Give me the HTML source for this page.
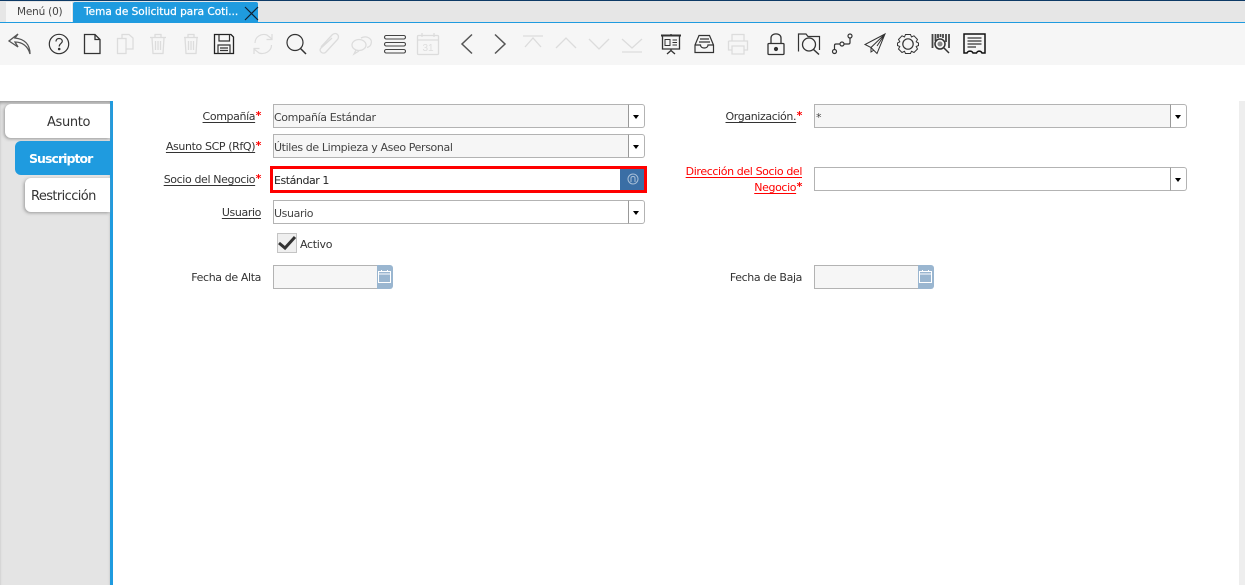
<!DOCTYPE html>
<html lang="es"><head><meta charset="utf-8"><title>Tema de Solicitud</title>
<style>
html,body{margin:0;padding:0;width:1245px;height:585px;overflow:hidden;background:#fff;font-family:"DejaVu Sans","Liberation Sans",sans-serif;color:#333}
div,span,svg{position:absolute;box-sizing:border-box}
.t{white-space:nowrap;font-size:11px;line-height:14px}
.l{white-space:nowrap;font-size:11px;line-height:14px;text-align:right;color:#333;letter-spacing:-.38px}
.l u{text-underline-offset:2px}
.l b{color:#f00;font-weight:bold;font-size:11px;position:relative;top:-1px;margin-left:.5px}
.f{border:1px solid #b3b3b3;background:#f6f6f6;height:24px;font-size:11px;line-height:25px;padding-left:0;white-space:nowrap;letter-spacing:-.38px;color:#444}
.b{border:1px solid #b3b3b3;border-left:1px solid #999;border-radius:0 3px 3px 0;background:#fff;width:17px;height:24px}
.b:after{content:"";position:absolute;left:4px;top:10px;border:3px solid transparent;border-top:4px solid #000;border-bottom:0;border-left-width:3.5px;border-right-width:3.5px}
.tab{left:0;height:34px;border-radius:6px 0 0 6px;background:#fff;box-shadow:-1px 1px 3px #999;font-size:13px;line-height:37px;color:#333;white-space:nowrap}
.cal{background:#9ab6d0;width:16px;height:24px;border-radius:0 3px 3px 0}
</style></head><body>
<div style="left:0;top:0;width:1245px;height:1px;background:#0d3a66"></div>
<div style="left:0;top:1px;width:1245px;height:21px;background:#e6e6e6"></div>
<div style="left:0;top:22px;width:1245px;height:1px;background:#1f9bdf"></div>
<div style="left:0;top:23px;width:1245px;height:42px;background:#f6f6f6"></div>
<div style="left:6px;top:2px;width:66px;height:20px;background:#f6f6f6;border-right:1px solid #fff"></div>
<div class="t" style="left:17px;top:5px;font-size:10.5px;letter-spacing:-.2px;color:#444">Menú (0)</div>
<div style="left:73px;top:2px;width:185px;height:20px;background:#1f9bdf;border-radius:2px 2px 0 0"></div>
<div class="t" style="left:84px;top:5px;color:#fff;font-size:10.5px;letter-spacing:.01px;font-weight:normal;-webkit-text-stroke:.25px #fff">Tema de Solicitud para Coti...</div>

<svg style="left:0;top:0" width="1245" height="65" viewBox="0 0 1245 65" fill="none" stroke="#333" stroke-width="1.2">
<path d="M245 7L258 20M258 7L245 20" stroke="#123"/>
<!-- back -->
<path d="M30 54C30 44 24 39 15 38L18 34L9 41L18 47L15 42C22 42 28 46 30 54Z" stroke="#555" stroke-width="1.3"/>
<!-- help -->
<circle cx="59" cy="44" r="9.7"/><path d="M56 41.500C56 39.500 57.500 38.500 59 38.500C61 38.500 62.300 39.800 62.300 41.300C62.300 43.500 59.200 43.500 59.200 46.500" /><circle cx="59.200" cy="49" r=".7" fill="#333"/>
<!-- new -->
<path d="M84.500 34.500H95L100 39.500V53.500H84.500Z M95 34.500V39.500H100" stroke-width="1.3"/>
<!-- disabled -->
<g stroke="#dcdcdc" stroke-width="1.3">
<path d="M117.500 38.500H126V53.500H117.500ZM122 38V34.500H129L133 38V49H126"/>
<path d="M150 37.500H166M155 37V34.500H161V37M152 38L153 53.500H163L164 38M155.500 41V50M158 41V50M160.500 41V50"/>
<path d="M184 37.500H198M188 37V34.500H194V37M185 38L186 53.500H196L197 38M188.500 41V50M191 41V50M193.500 41V50"/>
<path d="M255 43C255 37 261 33 267 35L272 39M272 34V39.500H266.500M271.500 45C271.500 51 265 55 259 53L254 49M254 54V48.500H259.500" stroke-width="1.2"/>
<path d="M321 47L332 35C336 31 341 36 337 40L326 52C323 55 318 51 321 48L332 38" fill="none"/>
<ellipse cx="359" cy="45" rx="7" ry="5.500"/><path d="M356 50L354 54L359 51"/><path d="M361 38C367 35 373 39 371 44C370.500 46 369 47 367 47.500"/>
<rect x="417.500" y="35.500" width="21" height="19" rx="1"/><path d="M417.500 40H438.500M422 33V37M434 33V37"/>
<path d="M523 36H543M525 47L533 38L541 47" />
<path d="M556 48L566 38L576 48M589 39L599 49L609 39M622 39L632 48L642 39M622 52H642" />
<path d="M732 41V34.500H744V41M728.500 41H747.500V50H744M732 50H728.500V41M732 46H744V54H732Z"/>
</g>
<text x="428" y="51" fill="#ddd" stroke="none" font-family="Liberation Sans" font-size="10" text-anchor="middle">31</text>
<!-- search -->
<circle cx="295" cy="42.500" r="8"/><path d="M300.500 48.500L306 54" stroke-width="1.5"/>
<!-- grid -->
<g stroke-width="1.100" stroke="#444"><rect x="384.500" y="35.500" width="21" height="3.500" rx="1.700"/><rect x="384.500" y="42.500" width="21" height="3.500" rx="1.700"/><rect x="384.500" y="49.500" width="21" height="3.500" rx="1.700"/></g>
<!-- save -->
<path d="M214.500 34.500H231L233.500 37V53.500H214.500Z" stroke-width="1.300" stroke="#222"/><path d="M219 34.500V41H229.500V34.500M218 53.500V45H230V53.500M220 48H228M220 50.500H228" stroke-width="1.200"/>
<!-- arrows -->
<path d="M472 34.500L462 44L472 53.500M495 34.500L505 44L495 53.500" stroke="#555" stroke-width="1.500"/>
<!-- report -->
<path d="M661 35.500H681" stroke-width="2"/><path d="M662.500 36V49H679.500V36M671 34V36M671 49V51M667 54L671 50.500L675 54" stroke-width="1.300"/><path d="M665 39.500H670V45.500H665ZM672.500 40H677M672.500 42.500H677M672.500 45H677" stroke-width="1"/>
<!-- archive -->
<path d="M695 45L699 35.500H709.500L713.500 45V52.500H695ZM695 45H700.500C700.500 49 708 49 708 45H713.500M699 42H710M700 39H709" stroke-width="1.200"/>
<!-- lock -->
<rect x="768" y="43.500" width="16" height="11" rx="1" stroke-width="1.300"/><path d="M771 43.500V38C771 32.500 781 32.500 781 38V43.500" stroke-width="1.300"/><circle cx="776" cy="49" r="1.500" fill="#333"/>
<!-- folder search -->
<path d="M798.500 51.500V34H806L808 36.500H819.500V50" stroke-width="1.200"/><circle cx="809" cy="44.500" r="6.500" stroke-width="1.300"/><path d="M813.500 49.500L819 54.500" stroke-width="1.500"/>
<!-- workflow -->
<circle cx="834.500" cy="51.500" r="2"/><circle cx="842" cy="44" r="2"/><circle cx="850" cy="36" r="2"/><path d="M834.500 49.500V45.500Q834.500 44 836 44H840M844 44H848.500Q850 44 850 42.500V38"/>
<!-- send -->
<path d="M885 34L865 44.500L871 47.500L877 53.500ZM885 34L871 47.500V52L874 50M885 34L877 46" stroke-width="1"/>
<!-- gear -->
<circle cx="908" cy="44" r="5.200" stroke-width="1.200"/><path d="M905.500 34.500H910.500L911.500 37L914 35.800L917.500 39.500L916.200 41.800L918.500 43V45.500L916.200 46.500L917.500 49L914 52.500L911.500 51.300L910.500 53.500H905.500L904.500 51.300L902 52.500L898.500 49L899.800 46.500L897.500 45.500V43L899.800 41.800L898.500 39.500L902 35.800L904.500 37Z" stroke-width="1"/>
<!-- barcode -->
<path d="M932.500 34V48M935.500 34V41M938 34V38M940.500 34V37M943 34V38M946 34V42M949 34V48" stroke-width="1.800" stroke="#444"/><circle cx="940" cy="44" r="5" stroke-width="1.500" fill="#f6f6f6"/><circle cx="940" cy="44" r="2.500" fill="#888" stroke="none"/><path d="M944 48L949 53" stroke-width="1.500"/>
<!-- receipt -->
<path d="M964 34H985V53H982C981 50.500 977.500 50.500 976.500 53H973C972 50.500 968 50.500 967 53H964Z" stroke-width="1.500" stroke="#111"/><path d="M967.500 38H981.500M967.500 41H981.500M967.500 44H981.500M967.500 47H976" stroke-width="1.500" stroke="#555"/>
</svg>

<!-- side panel -->
<div style="left:0;top:101px;width:110px;height:484px;background:#e4e4e4;box-shadow:inset 0 3px 3px -1px #999"></div>
<div style="left:110px;top:101px;width:3px;height:484px;background:#1f9bdf"></div>
<div style="left:1239px;top:101px;width:6px;height:484px;background:#eee"></div>
<div class="tab" style="left:5px;top:104px;width:105px;padding-left:42px;letter-spacing:-.35px">Asunto</div>
<div class="tab" style="left:15px;top:141px;width:95px;padding-left:14px;background:#1f9bdf;color:#fff;font-weight:bold;font-size:12.5px;letter-spacing:-.95px;box-shadow:none;line-height:35px">Suscriptor</div>
<div class="tab" style="left:25px;top:178px;width:85px;padding-left:6px;letter-spacing:-.6px">Restricción</div>

<!-- labels -->
<div class="l" style="right:984px;top:110px"><u>Compañía</u><b>*</b></div>
<div class="l" style="right:984px;top:140px"><u>Asunto SCP (RfQ)</u><b>*</b></div>
<div class="l" style="right:984px;top:173px"><u>Socio del Negocio</u><b>*</b></div>
<div class="l" style="right:984px;top:206px"><u>Usuario</u></div>
<div class="l" style="right:984px;top:271px">Fecha de Alta</div>
<div class="l" style="right:443px;top:110px"><u>Organización.</u><b>*</b></div>
<div class="l" style="right:443px;top:165px;color:#f00"><u>Dirección del Socio del</u></div>
<div class="l" style="right:443px;top:181px;color:#f00"><u>Negocio</u><b>*</b></div>
<div class="l" style="right:443px;top:271px">Fecha de Baja</div>

<!-- fields -->
<div class="f" style="left:273px;top:104px;width:356px">Compañía Estándar</div><div class="b" style="left:628px;top:104px"></div>
<div class="f" style="left:273px;top:134px;width:356px">Útiles de Limpieza y Aseo Personal</div><div class="b" style="left:628px;top:134px"></div>
<div style="left:270px;top:166px;width:377px;height:27px;border:3px solid #f00;background:#fff;font-size:11px;line-height:23px;padding-left:1px;white-space:nowrap;letter-spacing:-.45px;color:#222">Estándar 1</div>
<div style="left:620px;top:169px;width:24px;height:21px;background:#3a6ea5"></div>
<svg style="left:620px;top:169px" width="24" height="21" fill="none" stroke="#a9c0d8" stroke-width="1"><circle cx="13" cy="10" r="5"/><path d="M11 13V9C11 7 15 7 15 9V13"/></svg>
<div class="f" style="left:273px;top:200px;width:356px;background:#fff">Usuario</div><div class="b" style="left:628px;top:200px"></div>

<div style="left:277px;top:233px;width:20px;height:20px;background:#efefef;border:1px solid #c4c4c4"></div>
<svg style="left:277px;top:233px" width="20" height="20" fill="none" stroke="#333" stroke-width="3"><path d="M2 10L8 15L18 4"/></svg>
<div class="t" style="left:300px;top:238px;letter-spacing:-.3px">Activo</div>

<div class="f" style="left:273px;top:265px;width:105px"></div><div class="cal" style="left:377px;top:265px"></div>
<svg style="left:377px;top:265px" width="16" height="24" fill="none" stroke="#fff" stroke-width="1"><path d="M1.500 6.500H13.500V17.500H1.500ZM1.500 9H13.500M4.500 5V7M10.500 5V7"/></svg>

<div class="f" style="left:814px;top:104px;width:357px;padding-left:1px">*</div><div class="b" style="left:1170px;top:104px"></div>
<div class="f" style="left:814px;top:167px;width:357px;background:#fff"></div><div class="b" style="left:1170px;top:167px"></div>
<div class="f" style="left:814px;top:265px;width:105px"></div><div class="cal" style="left:918px;top:265px"></div>
<svg style="left:918px;top:265px" width="16" height="24" fill="none" stroke="#fff" stroke-width="1"><path d="M1.500 6.500H13.500V17.500H1.500ZM1.500 9H13.500M4.500 5V7M10.500 5V7"/></svg>
</body></html>
